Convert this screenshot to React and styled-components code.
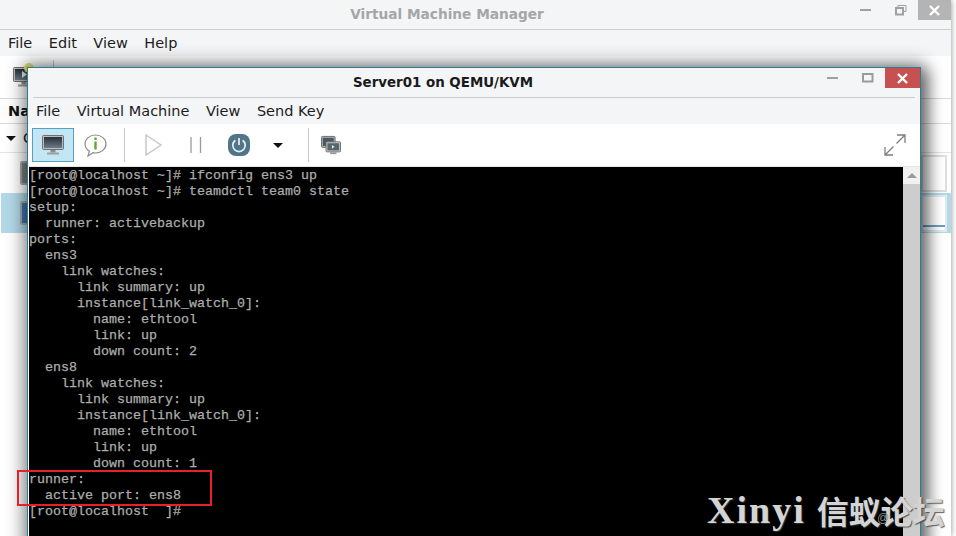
import React from "react";
import styled, { createGlobalStyle } from "styled-components";

const GlobalStyle = createGlobalStyle`
  html, body { margin: 0; padding: 0; background: #fff; overflow: hidden; }
  * { box-sizing: border-box; }
`;

const Desktop = styled.div`
  position: relative;
  width: 956px;
  height: 536px;
  overflow: hidden;
  background: #fff;
  font-family: "DejaVu Sans", sans-serif;
`;

// window behind
const ManagerWindow = styled.div`
  width: 951px;
  height: 536px;
  display: flex;
  flex-direction: column;
  background: #fff;
  box-shadow: 0 0 6px rgba(0, 0, 0, 0.45);
`;

const TitleBar = styled.div`
  position: relative;
  flex: none;
  height: 29px;
  display: flex;
  align-items: center;
  justify-content: center;
  padding-bottom: 1px;
  padding-right: ${(p) => (p.$active ? 62 : 57)}px;
  font-size: ${(p) => (p.$active ? 13.4 : 13.7)}px;
  font-weight: bold;
  color: ${(p) => (p.$active ? "#1a1a1a" : "#a4a6a8")};
  background: #f4f5f7;
`;

const Rule = styled.div`
  flex: none;
  height: 1px;
  margin: 0 ${(p) => p.$inset || 0}px;
  background: #cbcccd;
`;

const WinButtons = styled.div`
  position: absolute;
  top: 0;
  right: 0;
  height: 20px;
  display: flex;
`;

const WinButton = styled.div`
  width: ${(p) => p.$width}px;
  height: 20px;
  display: flex;
  align-items: center;
  justify-content: center;
  background: ${(p) => p.$bg || "transparent"};
`;

const MenuBar = styled.div`
  flex: none;
  height: 26px;
  display: flex;
  align-items: center;
  gap: 16.5px;
  padding-left: 8px;
  background: #f4f5f7;
  font-size: 14.5px;
  color: #1c1c1c;
`;

const ManagerToolbar = styled.div`
  flex: none;
  height: 42px;
  display: flex;
  align-items: center;
  padding-left: 13px;
  background: #fff;
`;

const TableHeader = styled.div`
  flex: none;
  height: 26px;
  display: flex;
  align-items: center;
  padding-left: 8px;
  border-top: 1px solid #d8d8d8;
  border-bottom: 1px solid #d8d8d8;
  font-size: 14.5px;
  font-weight: bold;
  color: #111;
`;

const GroupRow = styled.div`
  flex: none;
  height: 29px;
  display: flex;
  align-items: center;
  gap: 7px;
  padding-left: 6px;
  font-size: 14.5px;
  color: #222;
  border-bottom: 1px solid #e4e4e4;
`;

const Caret = styled.span`
  width: 0;
  height: 0;
  border-left: ${(p) => p.$size}px solid transparent;
  border-right: ${(p) => p.$size}px solid transparent;
  border-top: ${(p) => p.$size}px solid #111;
`;

const VmRow = styled.div`
  flex: none;
  height: 40px;
  display: flex;
  align-items: center;
  justify-content: space-between;
  margin-left: 1px;
  padding: 0 4px 0 19px;
  background: ${(p) => (p.$selected ? "#b3d9e8" : "#fff")};
`;

const VmIcon = styled.div`
  width: 22px;
  height: 24px;
  border: 2px solid #a8a8a8;
  border-radius: 2px;
  background: ${(p) => (p.$selected ? "#3f78ad" : "#7d7d7d")};
`;

const Graph = styled.div`
  width: 26px;
  height: 37px;
  background: #fff;
  border: 2px solid ${(p) => (p.$selected ? "#dfeaf0" : "#dedede")};
  box-shadow: ${(p) => (p.$selected ? "inset 0 -3px 0 #fff, inset 0 -5px 0 #6a9fc0" : "none")};
`;

// vm console window
const ConsoleWindow = styled.div`
  position: absolute;
  left: 27px;
  top: 67px;
  width: 894px;
  height: 480px;
  display: flex;
  flex-direction: column;
  border: 1px solid #2b7d97;
  box-shadow: 0 0 16px 4px rgba(0, 0, 0, 0.45), 8px 4px 14px rgba(0, 0, 0, 0.35);
  background: #f4f5f7;
`;

const ConsoleToolbar = styled.div`
  flex: none;
  height: 42px;
  display: flex;
  align-items: center;
  padding: 0 14px 0 4px;
  background: #fff;
`;

const ToolButton = styled.div`
  flex: none;
  width: ${(p) => p.$width || 42}px;
  height: 34px;
  display: flex;
  align-items: center;
  justify-content: center;
  background: ${(p) => (p.$active ? "#c3e6f5" : "transparent")};
  border: 1px solid ${(p) => (p.$active ? "#58a0c0" : "transparent")};
`;

const ToolSep = styled.div`
  flex: none;
  width: 1px;
  height: 34px;
  margin: 0 ${(p) => p.$gap || 8}px;
  background: #c6c6c6;
`;

const Spacer = styled.div`
  flex: 1;
`;

const ConsoleBody = styled.div`
  flex: 1;
  min-height: 0;
  display: flex;
  padding-left: 1px;
  background: #fff;
  border-top: 1px solid #e6e6e6;
`;

const Terminal = styled.pre`
  flex: 1;
  margin: 0;
  padding: 1px 0 0 0;
  background: #000;
  color: #adadad;
  font-family: "Liberation Mono", monospace;
  font-size: 13.33px;
  line-height: 16px;
  -webkit-text-stroke: 0.25px #adadad;
  overflow: hidden;
`;

const Scrollbar = styled.div`
  flex: none;
  width: 17px;
  background: #cdcdcd;
`;

const ScrollUp = styled.div`
  height: 17px;
  display: flex;
  align-items: center;
  justify-content: center;
  background: #f1f1f1;
`;

const ArrowUp = styled.span`
  width: 0;
  height: 0;
  border-left: 5px solid transparent;
  border-right: 5px solid transparent;
  border-bottom: 5px solid #9a9a9a;
`;

// things drawn on top of the screenshot
const Callout = styled.div`
  position: absolute;
  left: 17px;
  top: 470px;
  width: 195px;
  height: 36px;
  border: 2px solid #e8202c;
`;

const Watermark = styled.div`
  position: absolute;
  left: 707px;
  top: 487px;
  display: flex;
  align-items: center;
  gap: 11px;
  white-space: nowrap;
  color: #d4d4d4;
  text-shadow: 1px 1px 1px rgba(60, 60, 60, 0.8);
`;

const MarkLatin = styled.span`
  font-family: "Liberation Serif", serif;
  font-weight: bold;
  font-size: 38px;
  letter-spacing: 2px;
`;

const MarkCjk = styled.span`
  font-family: "Noto Sans CJK SC", sans-serif;
  font-weight: bold;
  font-size: 32px;
`;

const MarkAt = styled.span`
  position: absolute;
  left: 170px;
  top: 24px;
  font-family: "Liberation Sans", sans-serif;
  font-size: 12px;
  color: #8d8d8d;
  text-shadow: none;
`;

const LINES = `[root@localhost ~]# ifconfig ens3 up
[root@localhost ~]# teamdctl team0 state
setup:
  runner: activebackup
ports:
  ens3
    link watches:
      link summary: up
      instance[link_watch_0]:
        name: ethtool
        link: up
        down count: 2
  ens8
    link watches:
      link summary: up
      instance[link_watch_0]:
        name: ethtool
        link: up
        down count: 1
runner:
  active port: ens8
[root@localhost  ]#`;

const Minimize = () => (
  <svg width="12" height="4" viewBox="0 0 12 4"><rect y="1" width="11" height="2" fill="#a0a0a0" /></svg>
);

const Maximize = () => (
  <svg width="12" height="10" viewBox="0 0 12 10"><rect x="1" y="1" width="9.5" height="7.5" fill="none" stroke="#9a9a9a" strokeWidth="2" /></svg>
);

const Restore = () => (
  <svg width="12" height="11" viewBox="0 0 12 11">
    <path d="M3 2.5V.5h8v6H8.500" fill="none" stroke="#a0a0a0" />
    <rect x="1" y="3" width="7" height="6.500" fill="none" stroke="#a0a0a0" strokeWidth="2" />
  </svg>
);

const CloseX = () => (
  <svg width="11" height="11" viewBox="0 0 11 11"><path d="M1 1l9 9M10 1l-9 9" stroke="#fff" strokeWidth="2.4" /></svg>
);

const MonitorIcon = ({ size = 22, badge }) => (
  <svg width={size} height={size} viewBox="0 0 22 20" style={{ overflow: "visible" }}>
    <defs>
      <linearGradient id="screen" x1="0" y1="0" x2="0" y2="1">
        <stop offset="0" stopColor="#26303a" />
        <stop offset="1" stopColor="#6b7b88" />
      </linearGradient>
    </defs>
    <rect x="0.500" y="0.500" width="21" height="14" rx="1" fill="#bdbdbd" stroke="#6f6f6f" />
    <rect x="2" y="2" width="18" height="11" fill="url(#screen)" />
    <rect x="8.500" y="15" width="5" height="2.500" fill="#8c8c8c" />
    <rect x="5" y="17.500" width="12" height="2" rx="0.500" fill="#9d9d9d" />
    {badge && <path d="M9 4l5 3.500-5 3.500z" fill="#e8e8e8" />}
    {badge && <circle cx="16" cy="1" r="5" fill="#e8e070" />}
  </svg>
);

const InfoIcon = () => (
  <svg width="23" height="23" viewBox="0 0 23 23">
    <path d="M11.500 1C5.700 1 1 4.900 1 10c0 3.100 1.700 5.600 4.400 7.200L4 22l5-3.300c.8.200 1.600.3 2.500.3 5.800 0 10.500-4 10.500-9S17.300 1 11.500 1z" fill="#fff" stroke="#8d8d8d" strokeWidth="1.200" />
    <rect x="10.300" y="3.500" width="2.400" height="2.400" fill="#5ea63a" />
    <rect x="10.300" y="7.500" width="2.400" height="8" fill="#5ea63a" />
  </svg>
);

const PlayIcon = () => (
  <svg width="17" height="22" viewBox="0 0 17 22"><path d="M1 1l15 10L1 21z" fill="none" stroke="#c9c9c9" strokeWidth="1.500" /></svg>
);

const PauseIcon = () => (
  <svg width="12" height="16" viewBox="0 0 12 16"><path d="M1 0v16M10.500 0v16" stroke="#9a9a9a" strokeWidth="1.300" /></svg>
);

const PowerIcon = () => (
  <svg width="22" height="22" viewBox="0 0 22 22">
    <rect width="22" height="22" rx="8" fill="#4f7688" />
    <path d="M7.400 6.300a6.200 6.200 0 1 0 7.200 0" fill="none" stroke="#e9eef0" strokeWidth="1.700" />
    <path d="M11 4v7" stroke="#e9eef0" strokeWidth="1.700" />
  </svg>
);

const SnapshotIcon = () => (
  <svg width="22" height="21" viewBox="0 0 22 21">
    <rect x="0.500" y="0.500" width="15" height="12" rx="1" fill="#b5b5b5" stroke="#666" />
    <rect x="2" y="2" width="12" height="9" fill="#4a5863" />
    <rect x="5.500" y="6.500" width="16" height="11" rx="1" fill="#cfcfcf" stroke="#666" />
    <rect x="7" y="8" width="13" height="8" fill="#56666f" />
    <path d="M12 10l3 2-3 2z" fill="#e5e5e5" />
    <rect x="10" y="18" width="7" height="2" fill="#999" />
  </svg>
);

const FullscreenIcon = () => (
  <svg width="22" height="22" viewBox="0 0 22 22" fill="none" stroke="#7d7d7d" strokeWidth="1.300">
    <path d="M13 1h8v8M21 1L12.500 9.500" />
    <path d="M1 13v8h8M1 21l8.500-8.500" />
  </svg>
);

const App = () => (
  <>
    <GlobalStyle />
    <Desktop>
      <ManagerWindow>
        <TitleBar>
          Virtual Machine Manager
          <WinButtons>
            <WinButton $width={35}><Minimize /></WinButton>
            <WinButton $width={35}><Restore /></WinButton>
            <WinButton $width={33} $bg="#b4b4b4"><CloseX /></WinButton>
          </WinButtons>
        </TitleBar>
        <Rule />
        <MenuBar>
          <span>File</span>
          <span>Edit</span>
          <span>View</span>
          <span>Help</span>
        </MenuBar>
        <ManagerToolbar>
          <MonitorIcon badge />
          <ToolSep $gap={18} />
        </ManagerToolbar>
        <TableHeader>Name</TableHeader>
        <GroupRow>
          <Caret $size={5} />
          QEMU/KVM
        </GroupRow>
        <VmRow>
          <VmIcon />
          <Graph />
        </VmRow>
        <VmRow $selected>
          <VmIcon $selected />
          <Graph $selected />
        </VmRow>
      </ManagerWindow>

      <ConsoleWindow>
        <TitleBar $active>
          Server01 on QEMU/KVM
          <WinButtons>
            <WinButton $width={34}><Minimize /></WinButton>
            <WinButton $width={35}><Maximize /></WinButton>
            <WinButton $width={35} $bg="#c75050"><CloseX /></WinButton>
          </WinButtons>
        </TitleBar>
        <Rule $inset={5} />
        <MenuBar>
          <span>File</span>
          <span>Virtual Machine</span>
          <span>View</span>
          <span>Send Key</span>
        </MenuBar>
        <ConsoleToolbar>
          <ToolButton $active><MonitorIcon /></ToolButton>
          <ToolButton><InfoIcon /></ToolButton>
          <ToolSep />
          <ToolButton $width={40}><PlayIcon /></ToolButton>
          <ToolButton $width={46}><PauseIcon /></ToolButton>
          <ToolButton $width={40}><PowerIcon /></ToolButton>
          <ToolButton $width={38}><Caret $size={5} /></ToolButton>
          <ToolSep $gap={11} />
          <ToolButton $width={22}><SnapshotIcon /></ToolButton>
          <Spacer />
          <FullscreenIcon />
        </ConsoleToolbar>
        <ConsoleBody>
          <Terminal>{LINES}</Terminal>
          <Scrollbar>
            <ScrollUp><ArrowUp /></ScrollUp>
          </Scrollbar>
        </ConsoleBody>
      </ConsoleWindow>

      <Callout />
      <Watermark>
        <MarkLatin>Xinyi</MarkLatin>
        <MarkCjk>信蚁论坛</MarkCjk>
        <MarkAt>@</MarkAt>
      </Watermark>
    </Desktop>
  </>
);

export default App;
